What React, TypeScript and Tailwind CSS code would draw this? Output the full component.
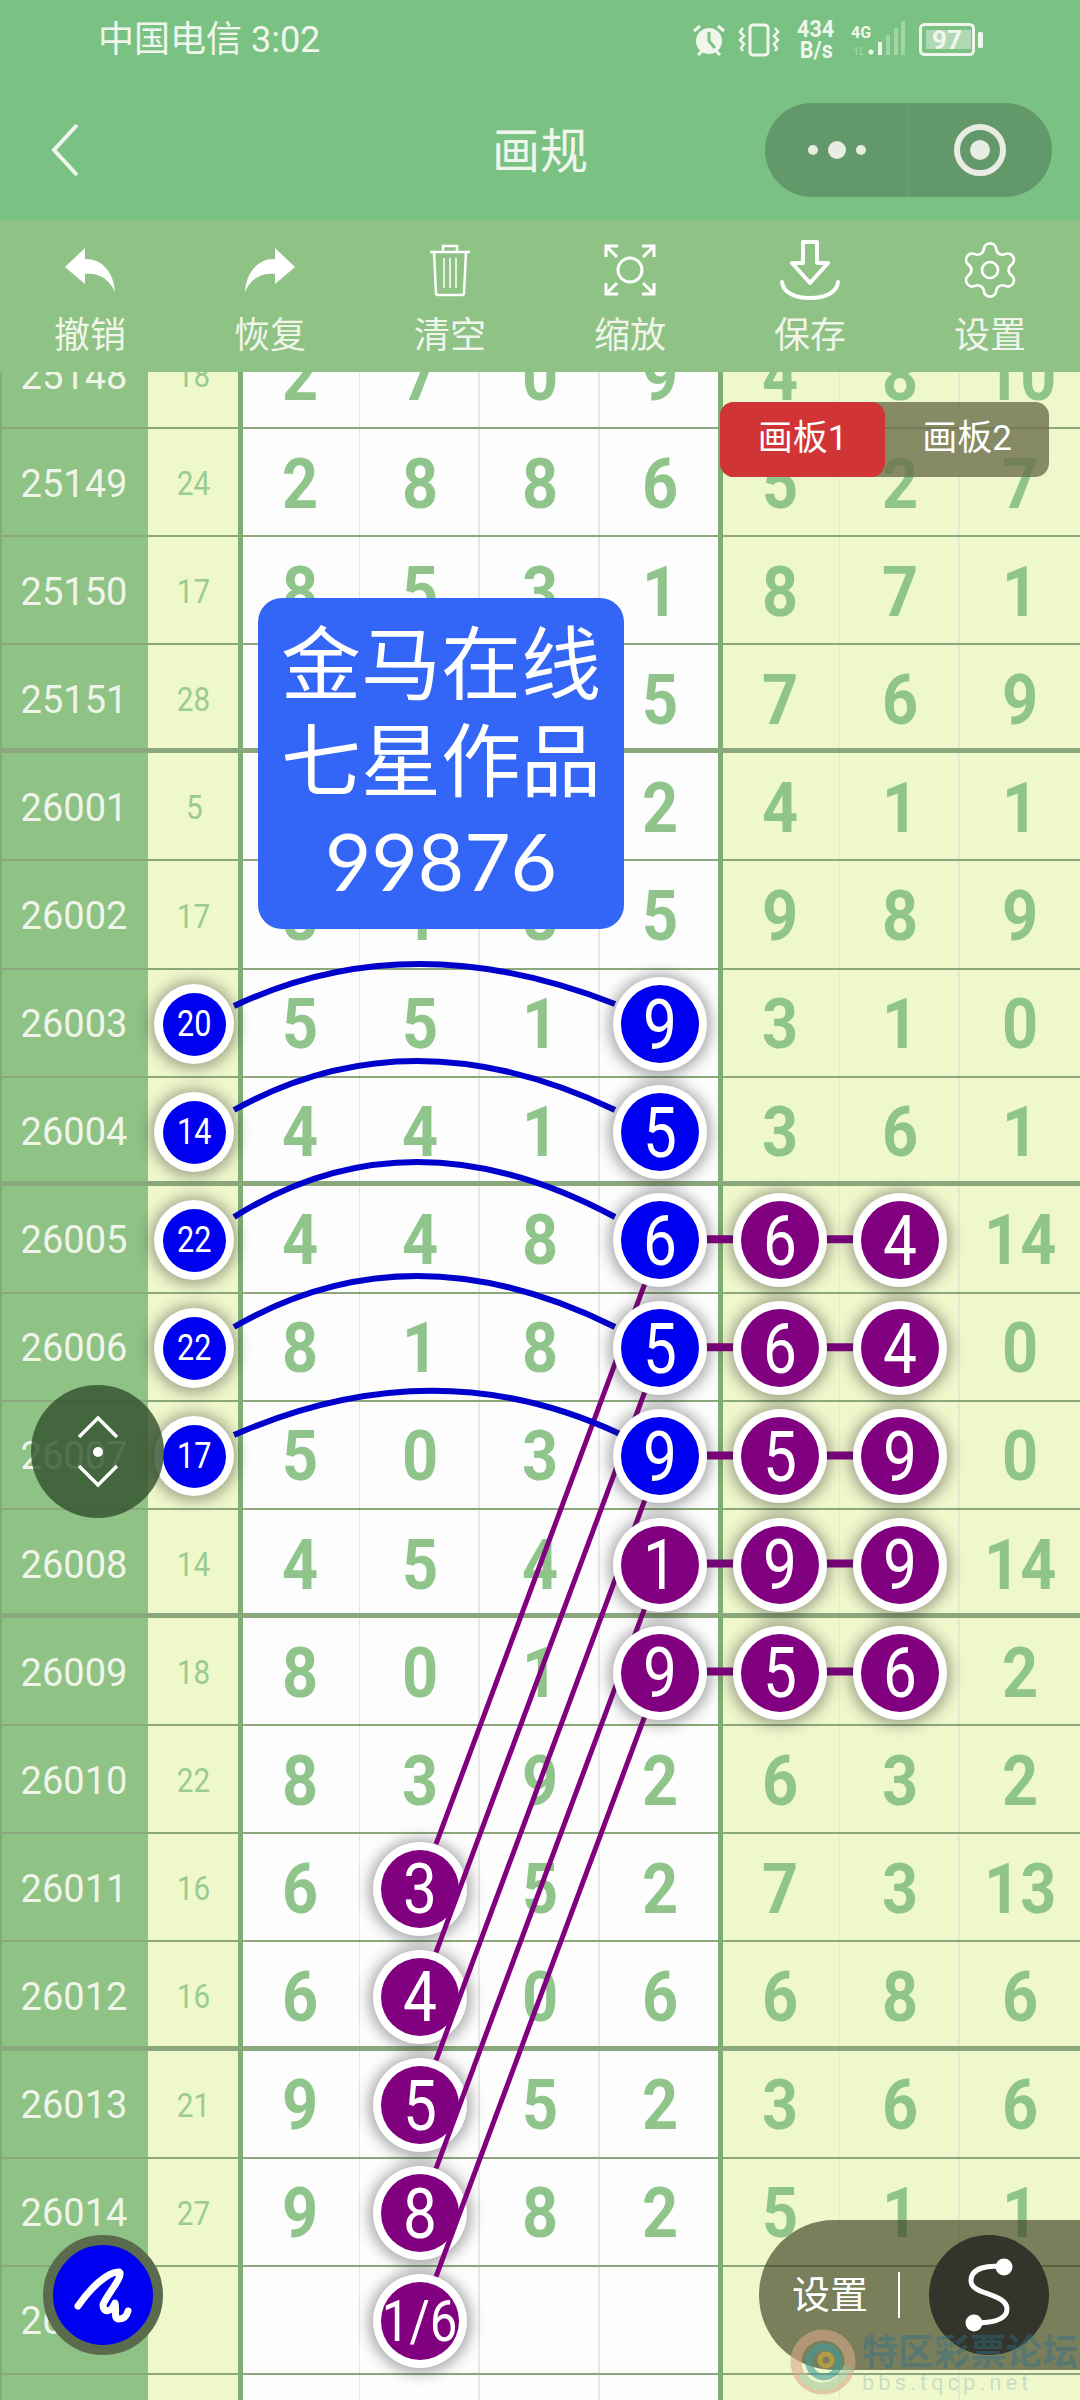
import { Settings } from "lucide-react"

type Row = {
  id: string
  sum: string
  nums: string[]
  blue?: number[]
  purple?: number[]
  thick?: boolean
}

// columns in `nums`: 0-3 white block, 4-6 right block. blue/purple: -1 = the sum column
const rows: Row[] = [
  { id: "25148", sum: "18", nums: ["2", "7", "0", "9", "4", "8", "10"] },
  { id: "25149", sum: "24", nums: ["2", "8", "8", "6", "5", "2", "7"] },
  { id: "25150", sum: "17", nums: ["8", "5", "3", "1", "8", "7", "1"] },
  { id: "25151", sum: "28", nums: ["", "", "", "5", "7", "6", "9"], thick: true },
  { id: "26001", sum: "5", nums: ["", "", "", "2", "4", "1", "1"] },
  { id: "26002", sum: "17", nums: ["8", "1", "8", "5", "9", "8", "9"] },
  { id: "26003", sum: "20", nums: ["5", "5", "1", "9", "3", "1", "0"], blue: [-1, 3] },
  { id: "26004", sum: "14", nums: ["4", "4", "1", "5", "3", "6", "1"], blue: [-1, 3], thick: true },
  { id: "26005", sum: "22", nums: ["4", "4", "8", "6", "6", "4", "14"], blue: [-1, 3], purple: [4, 5] },
  { id: "26006", sum: "22", nums: ["8", "1", "8", "5", "6", "4", "0"], blue: [-1, 3], purple: [4, 5] },
  { id: "26007", sum: "17", nums: ["5", "0", "3", "9", "5", "9", "0"], blue: [-1, 3], purple: [4, 5] },
  { id: "26008", sum: "14", nums: ["4", "5", "4", "1", "9", "9", "14"], purple: [3, 4, 5], thick: true },
  { id: "26009", sum: "18", nums: ["8", "0", "1", "9", "5", "6", "2"], purple: [3, 4, 5] },
  { id: "26010", sum: "22", nums: ["8", "3", "9", "2", "6", "3", "2"] },
  { id: "26011", sum: "16", nums: ["6", "3", "5", "2", "7", "3", "13"], purple: [1] },
  { id: "26012", sum: "16", nums: ["6", "4", "0", "6", "6", "8", "6"], purple: [1], thick: true },
  { id: "26013", sum: "21", nums: ["9", "5", "5", "2", "3", "6", "6"], purple: [1] },
  { id: "26014", sum: "27", nums: ["9", "8", "8", "2", "5", "1", "1"], purple: [1] },
  { id: "26015", sum: "", nums: ["", "1/6", "", "", "", "", ""], purple: [1] },
  { id: "", sum: "", nums: ["", "", "", "", "", "", ""] },
]

const cellStyles = [
  "bg-[#fdfdfd] shadow-[inset_3px_0_0_#7fae72,inset_-1px_0_0_#e4e6e2]",
  "bg-[#fdfdfd] shadow-[inset_-2px_0_0_#e6e8e4]",
  "bg-[#fdfdfd] shadow-[inset_-2px_0_0_#e6e8e4]",
  "bg-[#fdfdfd] shadow-[inset_-2px_0_0_#7fae72]",
  "bg-[#eef8cb] shadow-[inset_3px_0_0_#7fae72,inset_-1px_0_0_#e2ecc6]",
  "bg-[#eef8cb] shadow-[inset_-2px_0_0_#e2ead2]",
  "bg-[#eef8cb]",
]

// row centres on the page, used by the line overlay
const rowY = (i: number) => 1023 + i * 108.1

function Ball({ value, color, small, low }: { value: string; color: "blue" | "purple"; small?: boolean; low?: boolean }) {
  return (
    <div
      className={`relative flex items-center justify-center rounded-full bg-white shadow-[0_1px_14px_4px_rgba(40,40,40,0.4)] ${
        low ? "z-[1]" : "z-20"
      } ${small ? "h-[80px] w-[80px]" : "h-[94px] w-[94px]"}`}
    >
      <div
        className={`flex items-center justify-center overflow-hidden rounded-full text-white ${
          color === "blue" ? "bg-[#0000f0]" : "bg-[#800080]"
        } ${small ? "h-[63px] w-[63px] text-[36px]" : "h-[78px] w-[78px]"} ${
          value === "1/6" ? "text-[58px]" : small ? "" : "text-[71px]"
        }`}
      >
        <span className="inline-block scale-x-85">{value}</span>
      </div>
    </div>
  )
}

function TableRow({ row }: { row: Row }) {
  const pad = row.thick ? "pt-[6px]" : "pt-[3px]"
  return (
    <div
      className={`grid h-[108.1px] grid-cols-[148px_92px_repeat(7,120px)] grid-rows-[minmax(0,1fr)] border-b-2 border-[#8ba87d] leading-none ${
        row.thick ? "border-b-[5px] border-[#7fae72]" : ""
      }`}
    >
      <div className={`flex items-center justify-center bg-[#8fc285] text-[38px] text-[#f0f5ea] shadow-[inset_2px_0_0_#7fae72] ${pad}`}>
        {row.id}
      </div>
      <div className={`flex items-center justify-center bg-[#eef8cb] text-[33px] text-[#9ccb91] shadow-[inset_-2px_0_0_#7fae72] ${pad}`}>
        {row.blue?.includes(-1) ? <Ball value={row.sum} color="blue" small /> : <span className="inline-block scale-x-90">{row.sum}</span>}
      </div>
      {row.nums.map((n, c) => {
        const color = row.blue?.includes(c) ? "blue" : row.purple?.includes(c) ? "purple" : null
        return (
          <div key={c} className={`flex items-center justify-center text-[70px] font-bold text-[#8fc58a] ${cellStyles[c]} ${pad}`}>
            {color ? (
              <div className="font-normal">
                <Ball value={n} color={color} low={c === 1} />
              </div>
            ) : (
              <span className="inline-block scale-x-90">{n}</span>
            )}
          </div>
        )
      })}
    </div>
  )
}

function StatusIcons() {
  return (
    <div className="flex items-center text-[#f1f6ec]">
      {/* alarm */}
      <svg width="38" height="36" viewBox="0 0 36 36" className="mr-[10px]">
        <circle cx="18" cy="19" r="13" fill="currentColor" />
        <path d="M18 10v9l6 7" stroke="#79c283" strokeWidth="3" fill="none" />
        <path d="M3 9l6-5M33 9l-6-5M7 33l4-4M29 33l-4-4" stroke="currentColor" strokeWidth="3" />
      </svg>
      {/* vibrate */}
      <svg width="42" height="34" viewBox="0 0 42 34" className="mr-[16px]" fill="none" stroke="currentColor" strokeWidth="2.5">
        <rect x="12" y="2" width="18" height="30" rx="3" strokeWidth="3" />
        <path d="M5 5l-3 4 4 4-4 4 4 4-3 4 2 3M37 5l3 4-4 4 4 4-4 4 3 4-2 3" />
      </svg>
      <div className="mr-[15px] flex w-[40px] flex-col items-center text-[24px] font-bold leading-[21px]">
        <span className="scale-x-90">434</span>
        <span className="scale-x-90">B/s</span>
      </div>
      {/* network + signal */}
      <svg width="54" height="38" viewBox="0 0 54 38" className="mr-[14px]">
        <text x="0" y="17" fontSize="16" fontWeight="700" fill="currentColor" fontFamily="Roboto">4G</text>
        <text x="2" y="34" fontSize="11" fill="currentColor" opacity="0.4" fontFamily="Roboto">1L</text>
        <circle cx="20" cy="31" r="2.5" fill="currentColor" />
        <rect x="27" y="21" width="4" height="13" fill="currentColor" />
        <rect x="35" y="14" width="4" height="20" fill="currentColor" opacity="0.35" />
        <rect x="43" y="7" width="4" height="27" fill="currentColor" opacity="0.35" />
        <rect x="50" y="0" width="4" height="34" fill="currentColor" opacity="0.35" />
      </svg>
      {/* battery */}
      <svg width="64" height="34" viewBox="0 0 64 34">
        <rect x="1.5" y="1.5" width="53" height="30" rx="4" fill="none" stroke="currentColor" strokeWidth="3" />
        <rect x="7" y="7" width="45" height="19" fill="currentColor" opacity="0.45" />
        <text x="28" y="26" textAnchor="middle" fontSize="26" fontWeight="700" fill="currentColor" fontFamily="Roboto">97</text>
        <rect x="59" y="9" width="5" height="16" rx="1.5" fill="currentColor" />
      </svg>
    </div>
  )
}

function ToolIcon({ name }: { name: string }) {
  if (name === "undo" || name === "redo") {
    return (
      <svg width="50" height="44" viewBox="0 0 50 44" fill="white" className={name === "redo" ? "-scale-x-100" : ""}>
        <path d="M20 0 L0 19 L20 36 V26 C32 24 44 30 50 44 C49 24 36 10 20 11 Z" />
      </svg>
    )
  }
  if (name === "trash") {
    return (
      <svg width="42" height="54" viewBox="0 0 42 54" fill="none" stroke="white" strokeWidth="2.5">
        <path d="M1 9h40M14 9V3h14v6M5 9l2 41a2 2 0 0 0 2 2h24a2 2 0 0 0 2-2l2-41" />
        <path d="M15 15v30M21 15v30M27 15v30" strokeWidth="1.5" />
      </svg>
    )
  }
  if (name === "zoom") {
    return (
      <svg width="52" height="52" viewBox="0 0 52 52" fill="none" stroke="white" strokeWidth="3">
        <circle cx="26" cy="26" r="12" />
        <path d="M2 13V2h12M3 3l10 10M50 13V2H38M49 3L39 13M2 39v11h12M3 49l10-10M50 39v11H38M49 49L39 39" />
      </svg>
    )
  }
  if (name === "save") {
    return (
      <svg width="62" height="62" viewBox="0 0 62 62" fill="none" stroke="white" strokeWidth="4" strokeLinejoin="round" strokeLinecap="round">
        <path d="M24 3h14v21h11L31 44 13 24h11z" />
        <path d="M3 43c1 10 12 16 28 16s27-6 28-16" />
      </svg>
    )
  }
  return <Settings size={64} color="white" strokeWidth={1} />
}

const tools = [
  ["undo", "撤销"],
  ["redo", "恢复"],
  ["trash", "清空"],
  ["zoom", "缩放"],
  ["save", "保存"],
  ["gear", "设置"],
]

export default function App() {
  return (
    <div className="relative flex h-[2400px] w-[1080px] flex-col overflow-hidden font-['Roboto','Noto_Sans_CJK_SC',sans-serif]">
      {/* Status bar + title */}
      <header className="h-[220px] bg-[#79c283] text-[#f1f6ec]">
        <div className="flex h-[80px] items-center justify-between pl-[98px] pr-[97px]">
          <span className="text-[36px] leading-none">中国电信 3:02</span>
          <StatusIcons />
        </div>
        <div className="grid h-[140px] grid-cols-[1fr_auto_1fr] items-center">
          <svg width="30" height="54" viewBox="0 0 30 54" className="ml-[50px]" fill="none" stroke="#f1f6ec" strokeWidth="4">
            <path d="M27 2 L4 27 L27 52" />
          </svg>
          <span className="mt-[3px] text-[48px] leading-none">画规</span>
          <div className="mr-[28px] flex h-[94px] w-[287px] items-center justify-self-end rounded-full bg-[#63996a]">
            <div className="flex h-full w-[143px] items-center justify-center gap-[10px] border-r border-[#70a476] pl-[1px]">
              <div className="h-[10px] w-[10px] rounded-full bg-[#e8ece2]" />
              <div className="h-[18px] w-[18px] rounded-full bg-[#e8ece2]" />
              <div className="h-[10px] w-[10px] rounded-full bg-[#e8ece2]" />
            </div>
            <div className="flex flex-1 items-center justify-center">
              <div className="flex h-[52px] w-[52px] items-center justify-center rounded-full border-[6px] border-[#e8ece2]">
                <div className="h-[20px] w-[20px] rounded-full bg-[#e8ece2]" />
              </div>
            </div>
          </div>
        </div>
      </header>

      {/* Toolbar */}
      <div className="grid h-[152px] grid-cols-6 bg-[#8fc285] text-[#f0f5ea]">
        {tools.map(([icon, label]) => (
          <div key={label} className="flex flex-col items-center pt-[18px]">
            <div className="flex h-[64px] items-center justify-center">
              <ToolIcon name={icon} />
            </div>
            <span className="mt-[12px] text-[36px] leading-[44px]">{label}</span>
          </div>
        ))}
      </div>

      {/* Board */}
      <div className="relative flex-1 overflow-hidden bg-white">
        <div className="-mt-[51px]">
          {rows.map((row, i) => (
            <TableRow key={i} row={row} />
          ))}
        </div>

        {/* lines between the balls, in page coordinates */}
        <svg className="absolute left-0 top-[-372px] z-10" width="1080" height="2400" viewBox="0 0 1080 2400" fill="none">
          {[0, 1, 2, 3, 4].map((i) => {
            const y = rowY(2) + i * 108.1
            return (
              <g key={i} stroke="#800080">
                <path d={`M645 ${y + 44} L436 ${y + 605}`} strokeWidth="5" />
                <path d={`M705 ${y} H738 M825 ${y} H858`} strokeWidth="8" />
              </g>
            )
          })}
          <g stroke="#0000cc" strokeWidth="6">
            <path d="M234 1006 Q410 923 615 1004" />
            <path d="M234 1110 Q410 1012 615 1110" />
            <path d="M234 1217 Q410 1107 615 1217" />
            <path d="M234 1327 Q410 1225 615 1327" />
            <path d="M234 1435 Q435 1347 620 1434" />
          </g>
        </svg>
      </div>

      {/* Floating: board switch */}
      <div className="absolute left-[720px] top-[402px] flex h-[75px] w-[329px] rounded-[14px] bg-[#6c6f4c]/80 text-[35px] text-white">
        <div className="flex w-[165px] items-center justify-center rounded-[14px] bg-[#d13434]">画板1</div>
        <div className="flex flex-1 items-center justify-center">画板2</div>
      </div>

      {/* Floating: title card */}
      <div className="absolute left-[258px] top-[598px] z-30 flex h-[331px] w-[366px] flex-col items-center justify-center rounded-[24px] bg-[#3366f6] text-[80px] leading-[97px] text-white">
        <span>金马在线</span>
        <span>七星作品</span>
        <span className="font-['Lato','Roboto',sans-serif]">99876</span>
      </div>

      {/* Floating: scroll handle */}
      <div className="absolute left-[31px] top-[1385px] z-30 flex h-[133px] w-[133px] items-center justify-center rounded-full bg-[#2f4f2c]/80">
        <svg width="44" height="72" viewBox="0 0 44 72" fill="none" stroke="white" strokeWidth="3.5">
          <path d="M3 21 L22 2 L41 21 M3 50 L22 69 L41 50" />
          <circle cx="22" cy="36" r="5" fill="white" stroke="none" />
        </svg>
      </div>

      {/* Floating: pen */}
      <div className="absolute left-[43px] top-[2235px] z-30 flex h-[120px] w-[120px] items-center justify-center rounded-full border-[10px] border-[#5b6c4e] bg-[#0000f0]">
        <svg width="100" height="100" viewBox="10 10 100 100" fill="none" stroke="white" strokeWidth="7" strokeLinecap="round" strokeLinejoin="round">
          <path d="M35 71 C48 52 66 36 76 37 C82 40 62 62 60 70 C60 78 68 78 72 68 C74 76 70 84 76 84 C82 84 84 80 85 76" />
        </svg>
      </div>

      {/* Floating: settings pill */}
      <div className="absolute left-[759px] top-[2220px] z-30 flex h-[150px] w-[321px] items-center rounded-l-full bg-[#3a3d1e]/65 pl-[33px] text-white">
        <span className="text-[38px]">设置</span>
        <div className="ml-[30px] h-[46px] w-[2px] bg-white" />
        <div className="ml-auto mr-[31px] flex h-[120px] w-[120px] items-center justify-center rounded-full bg-[#33352a]">
          <svg width="120" height="120" viewBox="0 0 120 120" fill="none" stroke="white" strokeWidth="5">
            <path d="M75 32 C60 30 42 32 42 46 C42 60 78 58 78 74 C78 86 60 88 45 88" />
            <circle cx="75" cy="32" r="6" fill="white" />
            <circle cx="45" cy="88" r="6" fill="white" />
          </svg>
        </div>
      </div>

      {/* Watermark */}
      <div className="absolute left-[788px] top-[2326px] z-40 flex items-start">
        <svg width="70" height="72" viewBox="0 0 70 72" fill="none" className="opacity-60">
          <circle cx="35" cy="36" r="27" stroke="#d9a789" strokeWidth="11" />
          <path d="M14 48 C22 66 50 66 60 40" stroke="#a9c9a0" strokeWidth="8" />
          <circle cx="36" cy="36" r="15" stroke="#3f9c9a" strokeWidth="7" />
          <circle cx="38" cy="34" r="6" stroke="#d8b23c" strokeWidth="5" />
        </svg>
        <div className="ml-[4px] mt-[8px] flex flex-col">
          <span className="whitespace-nowrap text-[36px] font-bold leading-[38px] text-[#2f6e8c]/45">特区彩票论坛</span>
          <span className="whitespace-nowrap text-[22px] leading-[22px] tracking-[4px] text-[#7fa8bd]/35">bbs.tqcp.net</span>
        </div>
      </div>
    </div>
  )
}
